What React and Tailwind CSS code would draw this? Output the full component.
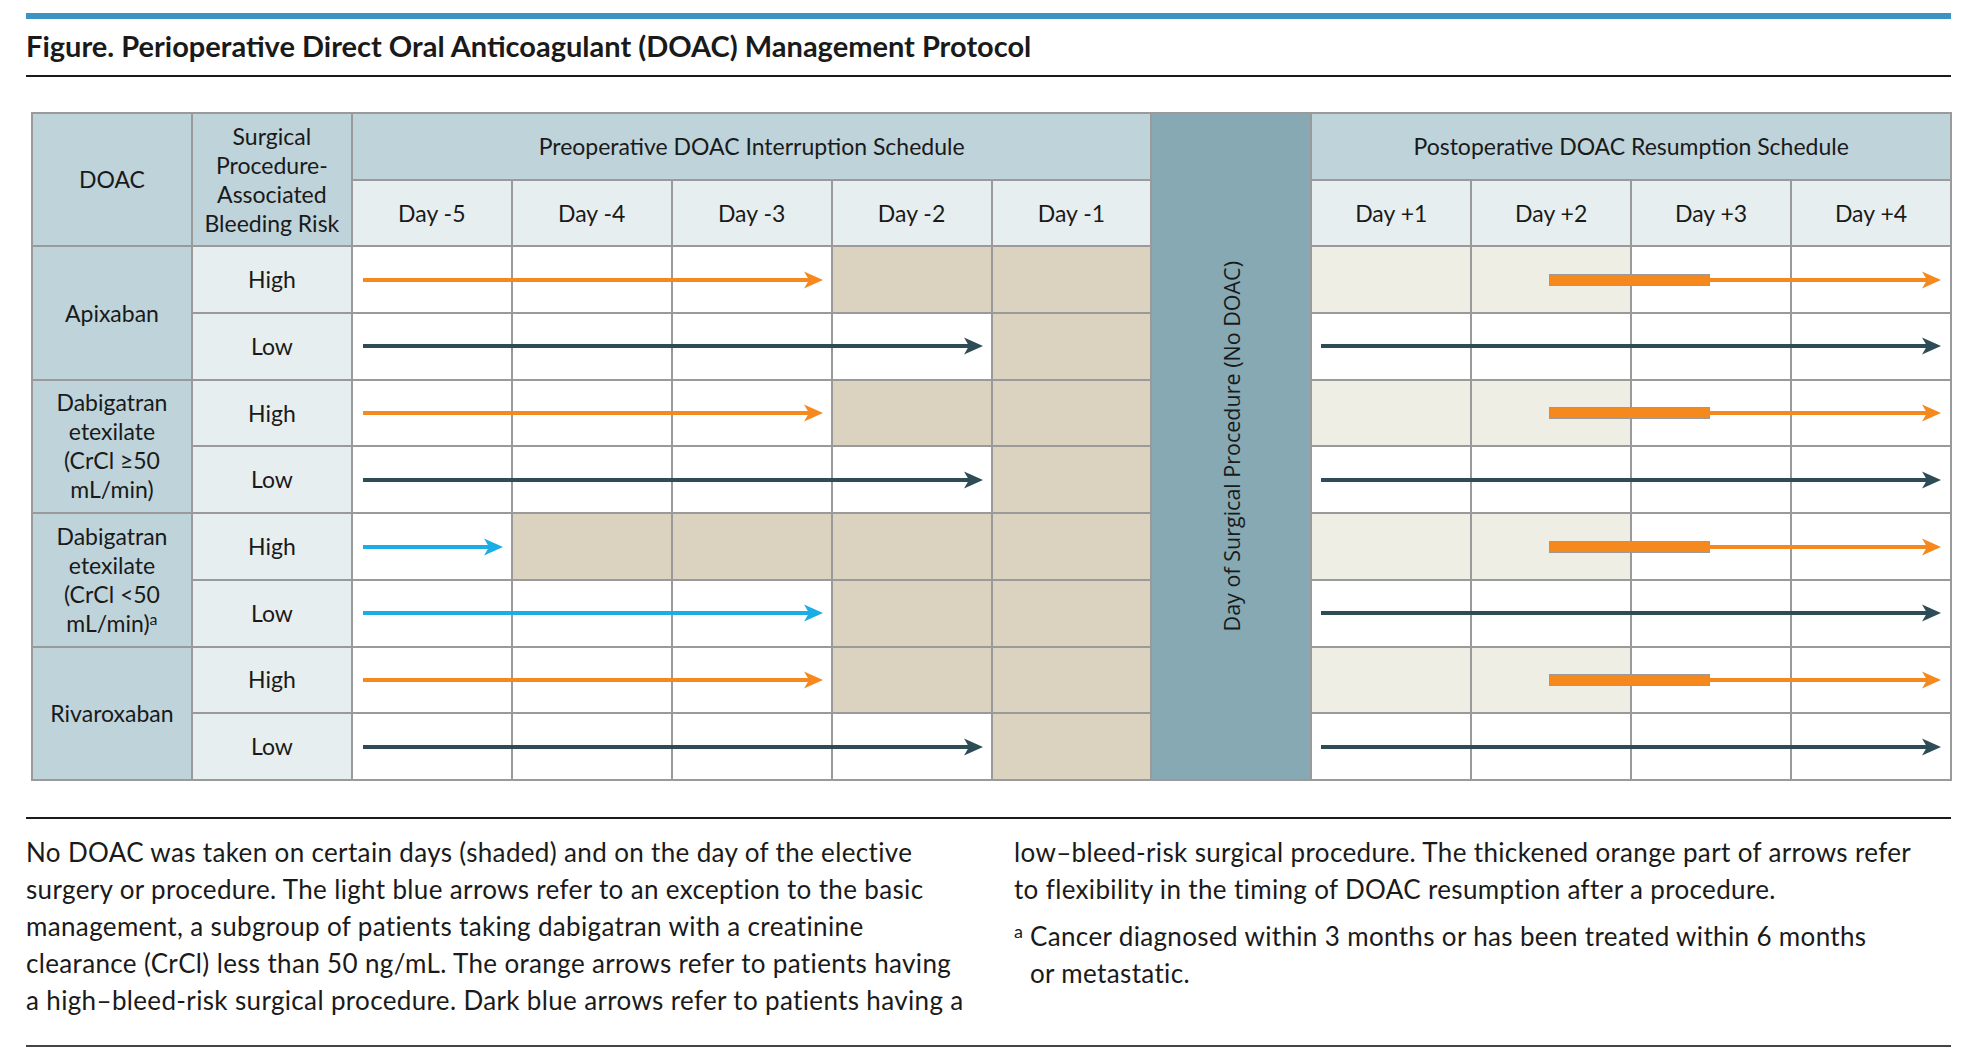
import React from "react";

const lato = { fontFamily: "Lato, 'Liberation Sans', sans-serif" };

const COL_START = {
  1: "col-start-1", 2: "col-start-2", 3: "col-start-3", 4: "col-start-4",
  5: "col-start-5", 6: "col-start-6", 7: "col-start-7", 8: "col-start-8",
  9: "col-start-9", 10: "col-start-10", 11: "col-start-11", 12: "col-start-12",
};
const COL_END = { 4: "col-end-4", 6: "col-end-6", 7: "col-end-7", 13: "col-end-13" };
const ROW_START = {
  1: "row-start-1", 2: "row-start-2", 3: "row-start-3", 4: "row-start-4", 5: "row-start-5",
  6: "row-start-6", 7: "row-start-7", 8: "row-start-8", 9: "row-start-9", 10: "row-start-10",
};
const ROW_END = { 5: "row-end-5", 7: "row-end-7", 9: "row-end-9", 11: "row-end-11" };

const COLORS = {
  orange: { bar: "bg-[#f5891e]", hex: "#f5891e" },
  dark: { bar: "bg-[#2e4c55]", hex: "#2e4c55" },
  blue: { bar: "bg-[#1aaee5]", hex: "#1aaee5" },
};

const drugs = [
  { name: <>Apixaban</>, start: 3 },
  { name: <>Dabigatran<br />etexilate<br />(CrCl ≥50<br />mL/min)</>, start: 5 },
  { name: <>Dabigatran<br />etexilate<br />(CrCl &lt;50<br />mL/min)<sup className="-top-[7px] text-[16px]">a</sup></>, start: 7 },
  { name: <>Rivaroxaban</>, start: 9 },
];

const rows = [
  { risk: "High", tan: [6, 7], post: "high", color: "orange", end: 6 },
  { risk: "Low", tan: [7], post: "low", color: "dark", end: 7 },
  { risk: "High", tan: [6, 7], post: "high", color: "orange", end: 6 },
  { risk: "Low", tan: [7], post: "low", color: "dark", end: 7 },
  { risk: "High", tan: [4, 5, 6, 7], post: "high", color: "blue", end: 4 },
  { risk: "Low", tan: [6, 7], post: "low", color: "blue", end: 6 },
  { risk: "High", tan: [6, 7], post: "high", color: "orange", end: 6 },
  { risk: "Low", tan: [7], post: "low", color: "dark", end: 7 },
];

const preDays = ["Day -5", "Day -4", "Day -3", "Day -2", "Day -1"];
const postDays = ["Day +1", "Day +2", "Day +3", "Day +4"];

function Arrow({ color }) {
  const c = COLORS[color];
  return (
    <div className="flex flex-1 items-center">
      <div className={`h-[4px] flex-1 ${c.bar}`} />
      <svg width="19" height="18" viewBox="0 0 19 18" className="-ml-[5px] shrink-0">
        <path d="M19 9 L0 0.5 L5 9 L0 17.5 Z" fill={c.hex} />
      </svg>
    </div>
  );
}

export default function App() {
  return (
    <div className="min-h-screen bg-white text-[#1a1a1a]" style={lato}>
      <div className="ml-[26px] w-[1925px] pt-[13px]">
        <div className="h-[6px] bg-[#3b94c1]" />
        <h1 className="mt-[9px] text-[29px] font-bold leading-[36px]">
          Figure. Perioperative Direct Oral Anticoagulant (DOAC) Management Protocol
        </h1>
        <div className="mt-[11px] h-[2px] bg-[#1a1a1a]" />

        <div className="ml-[5px] mt-[35px] grid h-[669px] w-[1921px] grid-cols-12 grid-rows-10 gap-[2px] bg-[#9a9a9a] p-[2px] text-[23px] leading-[29px]">
          <div className="col-start-1 row-start-1 row-end-3 flex items-center justify-center bg-[#bed3da]">DOAC</div>
          <div className="col-start-2 row-start-1 row-end-3 flex items-center justify-center bg-[#bed3da] text-center">
            Surgical<br />Procedure-<br />Associated<br />Bleeding Risk
          </div>
          <div className="col-start-3 col-end-8 row-start-1 flex items-center justify-center bg-[#bed3da]">
            Preoperative DOAC Interruption Schedule
          </div>
          <div className="col-start-9 col-end-13 row-start-1 flex items-center justify-center bg-[#bed3da]">
            Postoperative DOAC Resumption Schedule
          </div>
          {preDays.map((d, i) => (
            <div key={d} className={`${COL_START[i + 3]} row-start-2 flex items-center justify-center bg-[#e7eeef]`}>{d}</div>
          ))}
          {postDays.map((d, i) => (
            <div key={d} className={`${COL_START[i + 9]} row-start-2 flex items-center justify-center bg-[#e7eeef]`}>{d}</div>
          ))}
          <div
            className="col-start-8 row-start-1 row-end-11 flex items-center justify-center bg-[#86a9b4] text-[21.5px]"
            style={{ fontFamily: "'Open Sans', sans-serif" }}
          >
            <span className="rotate-180 [writing-mode:vertical-rl]">Day of Surgical Procedure (No DOAC)</span>
          </div>

          {drugs.map((d) => (
            <div key={d.start} className={`col-start-1 ${ROW_START[d.start]} ${ROW_END[d.start + 2]} flex items-center justify-center bg-[#bed3da] text-center`}>
              <div>{d.name}</div>
            </div>
          ))}

          {rows.map((r, i) => {
            const row = i + 3;
            return (
              <React.Fragment key={i}>
                <div className={`col-start-2 ${ROW_START[row]} flex items-center justify-center bg-[#e7eeef]`}>{r.risk}</div>
                {[3, 4, 5, 6, 7].map((c) => (
                  <div key={c} className={`${COL_START[c]} ${ROW_START[row]} ${r.tan.includes(c) ? "bg-[#dbd3bf]" : "bg-white"}`} />
                ))}
                {[9, 10, 11, 12].map((c) => (
                  <div key={c} className={`${COL_START[c]} ${ROW_START[row]} ${r.post === "high" && c < 11 ? "bg-[#eeeee4]" : "bg-white"}`} />
                ))}
                <div className={`col-start-3 ${COL_END[r.end]} ${ROW_START[row]} flex items-center pl-[10px] pr-[8px]`}>
                  <Arrow color={r.color} />
                </div>
                {r.post === "high" ? (
                  <div className={`col-start-10 col-end-13 ${ROW_START[row]} flex items-center pl-[77px] pr-[9px]`}>
                    <div className="h-[12px] w-[161px] shrink-0 border border-[#9a9a9a] bg-[#f5891e]" />
                    <Arrow color="orange" />
                  </div>
                ) : (
                  <div className={`col-start-9 col-end-13 ${ROW_START[row]} flex items-center pl-[9px] pr-[9px]`}>
                    <Arrow color="dark" />
                  </div>
                )}
              </React.Fragment>
            );
          })}
        </div>

        <div className="mt-[36px] h-[2px] bg-[#1a1a1a]" />
        <div className="mt-[15px] flex whitespace-nowrap text-[26px] leading-[37px] tracking-[0.35px]">
          <div className="w-[988px] shrink-0">
            No DOAC was taken on certain days (shaded) and on the day of the elective<br />
            surgery or procedure. The light blue arrows refer to an exception to the basic<br />
            management, a subgroup of patients taking dabigatran with a creatinine<br />
            clearance (CrCl) less than 50 ng/mL. The orange arrows refer to patients having<br />
            a high–bleed-risk surgical procedure. Dark blue arrows refer to patients having a
          </div>
          <div className="flex-1">
            low–bleed-risk surgical procedure. The thickened orange part of arrows refer<br />
            to flexibility in the timing of DOAC resumption after a procedure.
            <div className="mt-[10px] flex">
              <span className="w-[16px] shrink-0 text-[18px] leading-[26px]">a</span>
              <div>
                Cancer diagnosed within 3 months or has been treated within 6 months<br />
                or metastatic.
              </div>
            </div>
          </div>
        </div>
        <div className="mt-[26px] h-[2px] bg-[#444]" />
      </div>
    </div>
  );
}
